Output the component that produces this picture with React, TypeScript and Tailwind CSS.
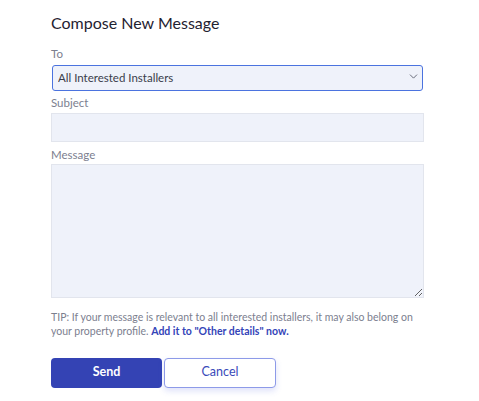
import { ChevronDown } from "lucide-react";

export default function App() {
  return (
    <div className="min-h-screen bg-white font-['Lato','Liberation_Sans',sans-serif]">
      <div className="w-[373px] ml-[51px] pt-[11px]">
        <h1 className="text-[16px] leading-[24px] text-[#1f2231]">
          Compose New Message
        </h1>

        {/* To */}
        <label className="block mt-[11px] text-[11.5px] leading-[16px] text-[#7c808f]">To</label>
        <div className="relative mt-[2px] mx-[1px]">
          <select className="appearance-none w-full h-[26px] pl-[5px] pr-6 text-[11.5px] text-[#3a3d4a] bg-[#eff2fa] border-[1.5px] border-[#4b73df] rounded-[3px] outline-none">
            <option>All Interested Installers</option>
          </select>
          <ChevronDown className="absolute right-[3px] top-[6px] w-[13px] h-[13px] text-[#555968] pointer-events-none" strokeWidth={1.6} />
        </div>

        {/* Subject */}
        <label className="block mt-[4px] text-[11.5px] leading-[16px] text-[#7c808f]">Subject</label>
        <input
          type="text"
          className="block mt-[2px] w-full h-[29px] bg-[#eff2fa] border border-[#e2e5ed] outline-none"
        />

        {/* Message */}
        <label className="block mt-[5px] text-[11.5px] leading-[16px] text-[#7c808f]">Message</label>
        <textarea className="block mt-[1px] w-full h-[134px] bg-[#eff2fa] border border-[#e2e5ed] outline-none" />

        <p className="mt-[12px] text-[10.5px] leading-[14.5px] text-[#7c808f]">
          TIP: If your message is relevant to all interested installers, it may also belong on your property profile.{" "}
          <a href="#" className="text-[#3344b8] font-bold leading-[14.5px]">
            Add it to "Other details" now.
          </a>
        </p>

        <div className="flex gap-[2px] mt-[19px]">
          <button className="w-[111px] h-[30px] rounded-[4px] bg-[#3443b4] text-white text-[12.5px] font-bold">
            Send
          </button>
          <button className="w-[112px] h-[30px] rounded-[4px] bg-white border border-[#8d9ae8] text-[#3a4ab9] text-[12.5px] shadow-[0_3px_6px_rgba(70,90,220,0.18)]">
            Cancel
          </button>
        </div>
      </div>
    </div>
  );
}
